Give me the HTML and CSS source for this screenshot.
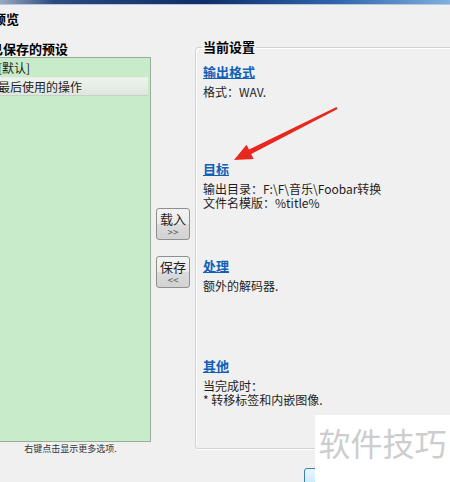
FILE: index.html
```html
<!DOCTYPE html>
<html lang="zh-CN">
<head>
    <meta charset="UTF-8">
    <title>预览</title>
    <link rel="stylesheet" href="styles.css">
</head>
<body>
    <div class="titlebar"></div>
    <div class="window-title">预览</div>

    <div class="main">
        <div class="presets">
            <div class="presets-label">已保存的预设</div>
            <div class="preset-list">
                <div class="preset-item">[默认]</div>
                <div class="preset-item selected">最后使用的操作</div>
            </div>
            <div class="presets-hint">右键点击显示更多选项.</div>
        </div>

        <div class="actions">
            <button class="act-btn">载入<span>&gt;&gt;</span></button>
            <button class="act-btn">保存<span>&lt;&lt;</span></button>
        </div>

        <fieldset class="current">
            <legend>当前设置</legend>
            <div class="section">
                <a class="section-link" href="#">输出格式</a>
                <div class="section-body">格式：WAV.</div>
            </div>
            <div class="section">
                <a class="section-link" href="#">目标</a>
                <div class="section-body">输出目录：F:\F\音乐\Foobar转换<br>文件名模版：%title%</div>
            </div>
            <div class="section">
                <a class="section-link" href="#">处理</a>
                <div class="section-body">额外的解码器.</div>
            </div>
            <div class="section">
                <a class="section-link" href="#">其他</a>
                <div class="section-body">当完成时：<br>* 转移标签和内嵌图像.</div>
            </div>
        </fieldset>
    </div>

    <div class="footer">
        <button class="dlg-btn">确定</button>
    </div>

    <svg class="arrow" width="450" height="482" viewBox="0 0 450 482">
        <polygon points="337.5,108.9 251.2,154.1 253.7,159.0 234,160 246.5,144.8 249,149.6 336.5,107.1" fill="#e8281e"/>
    </svg>

    <div class="watermark">软件技巧</div>
</body>
</html>
```

FILE: styles.css
```css
body {
    margin: 0;
    width: 450px;
    height: 482px;
    overflow: hidden;
    position: relative;
    background-color: #f0f0f0;
    font-family: "Noto Sans CJK SC", "DejaVu Sans", sans-serif;
    font-size: 12px;
    color: #1e1e1e;
}

.titlebar {
    height: 4px;
    background: linear-gradient(to right, #9aaac0 0%, #2a4a80 12%, #0f2d68 45%, #2f66b0 75%, #7fb0e0 100%);
    border-bottom: 1px solid #b8c8dc;
}

.window-title {
    margin: 4px 0 0 -7px;
    font-size: 13px;
    font-weight: bold;
    line-height: 20px;
    color: #000;
}

.main {
    display: flex;
    margin-top: 10px;
    height: 420px;
}

.presets {
    width: 161px;
    margin-left: -10px;
    flex-shrink: 0;
}

.presets-label {
    font-size: 13px;
    font-weight: bold;
    line-height: 16px;
    margin-top: 2px;
    color: #000;
}

.preset-list {
    height: 382px;
    background-color: #c8ecca;
    border: 1px solid #98ad9a;
    padding-top: 1px;
}

.preset-item {
    padding-left: 7px;
    line-height: 17px;
    margin-right: 2px;
}

.preset-item.selected {
    background: linear-gradient(to bottom, #eef3ee, #dfe6df);
    border-top: 1px solid #e6ece6;
    border-bottom: 1px solid #c7d2c7;
    margin-top: 1px;
}

.presets-hint {
    text-align: center;
    font-size: 9px;
    line-height: 12px;
    margin-top: 1px;
    color: #333;
}

.actions {
    width: 44px;
    flex-shrink: 0;
    display: flex;
    flex-direction: column;
    align-items: flex-start;
    padding: 169px 0 0 5px;
    gap: 16px;
    box-sizing: border-box;
}

.act-btn {
    width: 34px;
    height: 32px;
    padding: 0;
    display: flex;
    flex-direction: column;
    align-items: center;
    justify-content: center;
    font-family: inherit;
    font-size: 13px;
    line-height: 15px;
    color: #1e1e1e;
    background: linear-gradient(to bottom, #f3f3f3 0%, #ebebeb 50%, #dcdcdc 51%, #d2d2d2 100%);
    border: 1px solid #8e8f8f;
    border-radius: 3px;
}

.act-btn span {
    font-size: 10px;
    line-height: 12px;
    color: #555;
}

.current {
    margin: 1px 0 0 0;
    padding: 0 0 0 7px;
    width: 300px;
    flex-shrink: 0;
    height: 407px;
    border: 1px solid #d2d2d2;
    border-radius: 3px 0 0 3px;
    box-shadow: inset 1px 1px 0 #fff, 1px 1px 0 #fff;
}

.current legend {
    padding: 0 1px;
    margin-left: -1px;
    font-size: 13px;
    font-weight: bold;
    line-height: 14px;
    color: #000;
}

.section {
    height: 97px;
}

.section:first-of-type {
    margin-top: 10px;
}

.section:nth-of-type(3) {
    height: 100px;
}

.section-link {
    display: block;
    font-size: 13px;
    font-weight: bold;
    color: #1060b8;
    text-decoration: underline;
    line-height: 16px;
}

.section-body {
    margin-top: 5px;
    line-height: 14px;
}

.footer {
    padding: 9px 0 0 304px;
}

.dlg-btn {
    width: 75px;
    height: 23px;
    font-family: inherit;
    font-size: 12px;
    border: 1px solid #3c7fb1;
    border-radius: 3px;
    background: linear-gradient(to bottom, #eaf6fd, #bee6fd);
}

.arrow {
    position: absolute;
    left: 0;
    top: 0;
}

.watermark {
    position: absolute;
    right: 0;
    bottom: 0;
    width: 135px;
    height: 67px;
    background-color: #fff;
    color: #cdcdcd;
    font-size: 32px;
    line-height: 50px;
    padding-top: 2px;
    box-sizing: border-box;
    text-align: center;
}
```
